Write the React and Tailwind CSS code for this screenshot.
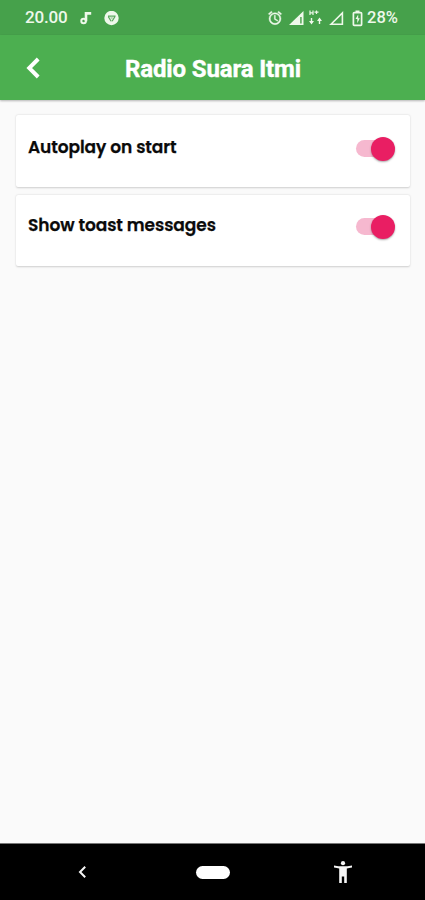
function StatusBar() {
  return (
    <div className="flex h-[35px] shrink-0 items-center bg-[#46a14b] pt-px pr-[27px] pl-[25px] text-[17px] font-medium text-[#eef8ea]">
      <span className="w-[44px] tracking-[-0.2px] whitespace-nowrap">20.00</span>
      <svg className="ml-[11px] h-4 w-3" viewBox="0 0 12 16" fill="none" stroke="currentColor">
        <circle cx="3.6" cy="11" r="2.3" strokeWidth="2" />
        <path d="M6 11.2V3.4H11.2" strokeWidth="2.6" />
      </svg>
      <svg className="ml-[12px] h-[15px] w-[15px]" viewBox="0 0 15 15">
        <circle cx="7.5" cy="7" r="7.2" fill="currentColor" />
        <path d="M4 5.2h7.6M4.3 5.6l2.8 4.6M10.9 5.6l-2.8 4.6" fill="none" stroke="#5aa85e" strokeWidth="1.2" />
        <circle cx="7.6" cy="7" r="1.3" fill="#b5d8b3" />
      </svg>
      <div className="ml-auto flex items-center">
        <svg className="h-4 w-4" viewBox="0 0 24 24" fill="currentColor" stroke="currentColor" strokeWidth="0.6">
          <path d="m22 5.72-4.6-3.86-1.29 1.53 4.6 3.86L22 5.72zM7.88 3.39 6.6 1.86 2 5.71l1.29 1.53 4.59-3.85zM12.5 8H11v6l4.75 2.85.75-1.23-4-2.37V8zM12 4a9 9 0 1 0 0 18 9 9 0 0 0 0-18zm0 16a7 7 0 1 1 0-14 7 7 0 0 1 0 14z" />
        </svg>
        <svg className="ml-[6px] h-4 w-[15px]" viewBox="0 0 15 16">
          <path d="M0 15 14.5 1v14z" fill="currentColor" />
          <path d="M11 7h1.8v6.5H11z" fill="#6ab36b" />
        </svg>
        <svg className="ml-[5px] h-4 w-[14px]" viewBox="0 0 14 16" fill="none" stroke="currentColor">
          <path d="M1 .5v4.5M4 .5v4.5M1 2.8h3M5.5 2.2h4M7.5 .5v3.5" strokeWidth="1.2" />
          <path d="M2.5 8v5M10.5 14V9" strokeWidth="1.4" />
          <path d="m0 11 2.5 3.5L5 11zM8 11l2.5-3.5L13 11z" fill="currentColor" stroke="none" />
        </svg>
        <svg className="ml-[6px] h-4 w-[15px]" viewBox="0 0 15 16">
          <path d="M2 14.2 13.4 3v11.2z" fill="none" stroke="currentColor" strokeWidth="1.6" />
        </svg>
        <svg className="ml-[8px] h-[17px] w-[11px]" viewBox="0 0 11 17" fill="none" stroke="currentColor">
          <path d="M3.5.5h4v2h-4z" fill="currentColor" stroke="none" />
          <rect x="1.4" y="2.7" width="8.2" height="12.6" rx="0.8" strokeWidth="1.7" />
          <path d="M6.2 4.5 3.5 9h1.8v4.2L7.8 8.3H6.2z" fill="currentColor" stroke="none" />
        </svg>
        <span className="ml-[4px] w-[31px] text-[16.5px] whitespace-nowrap">28%</span>
      </div>
    </div>
  );
}

function AppBar() {
  return (
    <header className="z-10 flex h-[65px] shrink-0 items-center bg-[#4caf50] pl-[25px] text-white shadow-[0_1px_2px_rgba(0,0,0,0.28)]">
      <svg className="mt-[1px] h-[22px] w-4" viewBox="0 0 16 22" fill="none" stroke="currentColor" strokeWidth="3.9">
        <path d="M13.2 2 4.2 11l9 9" />
      </svg>
      <h1 className="mt-[3px] ml-[84px] text-[24px] leading-7 font-bold tracking-[-0.14px] whitespace-nowrap [-webkit-text-stroke:0.4px_white]">Radio Suara Itmi</h1>
    </header>
  );
}

function Switch() {
  return (
    <span role="switch" aria-checked="true" className="mt-[1.5px] flex h-6 w-[39px] items-center justify-end">
      <span className="-mr-[23px] h-[17px] w-[38px] rounded-full bg-[#f6b8cf]" />
      <span className="z-[1] h-6 w-6 rounded-full bg-[#e91e63] shadow-[0_1px_2px_rgba(0,0,0,0.35)]" />
    </span>
  );
}

function SettingCard({ label, className }) {
  return (
    <section className={`flex items-start justify-between rounded-[2px] bg-white pr-[15px] pl-3 shadow-[0_0.5px_2px_rgba(0,0,0,0.18)] ${className}`}>
      <span className="font-[Poppins,Inter,sans-serif] text-[17px] leading-6 font-semibold tracking-[-0.08px] whitespace-nowrap text-[#0a0a0a] [-webkit-text-stroke:0.25px_#0a0a0a]">{label}</span>
      <Switch />
    </section>
  );
}

export default function App() {
  return (
    <div className="flex h-[900px] w-[425px] flex-col overflow-hidden bg-[#fafafa] font-[Roboto,sans-serif]">
      <StatusBar />
      <AppBar />
      <main className="flex flex-1 flex-col gap-[8px] pt-[15px] pr-[15px] pl-4">
        <SettingCard className="h-[72px] pt-[20px]" label="Autoplay on start" />
        <SettingCard className="h-[71px] pt-[18px]" label="Show toast messages" />
      </main>
      <nav className="flex h-[57px] shrink-0 items-center border-t border-[#777] bg-black text-[#f5f5f5]">
        <svg className="ml-[77px] h-[14px] w-[10px]" viewBox="0 0 10 14" fill="none" stroke="currentColor" strokeWidth="2">
          <path d="M8.2 1.7 3 7l5.2 5.3" />
        </svg>
        <span className="ml-[109px] h-[13px] w-[34px] rounded-full bg-white" />
        <svg className="ml-[104px] h-[22px] w-[18px]" viewBox="0 0 18 22" fill="currentColor">
          <circle cx="9" cy="2.2" r="2.1" />
          <path d="M0 4.4q9 1.8 18 0v2.2q-3 .7-5.2 1V22h-2.6v-6.5H7.8V22H5.2V7.6Q3 7.3 0 6.6z" />
        </svg>
      </nav>
    </div>
  );
}
